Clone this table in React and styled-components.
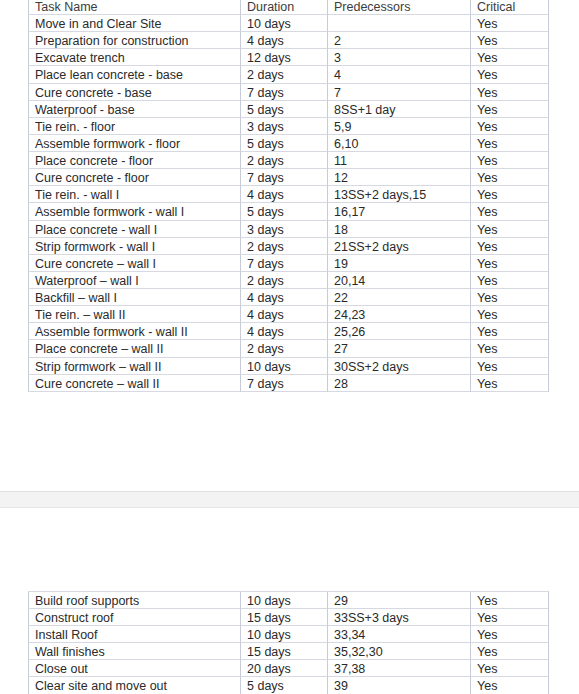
import React from "react";
import styled, { createGlobalStyle } from "styled-components";

const GlobalStyle = createGlobalStyle`
  html, body {
    margin: 0;
    padding: 0;
    background: #ffffff;
    overflow: hidden;
  }
`;

const Page = styled.div`
  width: 579px;
  height: 694px;
  overflow: hidden;
  font-family: "Liberation Sans", Arial, sans-serif;
  font-size: 12.5px;
  color: #2a2a2a;
`;

const Sheet = styled.div`
  display: grid;
  grid-template-columns: 212px 87px 143px 79px;
  margin-left: 28px;
  width: 521px;
  margin-top: ${(p) => (p.$first ? "-2px" : "0")};
  border-top: ${(p) => (p.$first ? "none" : "1px solid #d6d9e2")};
`;

const Cell = styled.div`
  box-sizing: border-box;
  height: ${(p) => p.$h}px;
  line-height: ${(p) => p.$h + 1}px;
  padding-left: 6px;
  border-left: 1px solid #c8ccd8;
  border-right: ${(p) => (p.$last ? "1px solid #c8ccd8" : "none")};
  border-bottom: 1px solid #d6d9e2;
  white-space: nowrap;
  overflow: hidden;
  color: ${(p) => (p.$head ? "#3c3c3c" : "#2a2a2a")};
`;

const Band = styled.div`
  margin-top: 99px;
  height: 15px;
  background: #f3f3f3;
  border-top: 1px solid #e0e0e0;
  border-bottom: 1px solid #e6e6e6;
`;

const Gap = styled.div`
  height: 83px;
`;

const ROW = 17.136;

const firstRows = [
  ["Move in and Clear Site", "10 days", "", "Yes"],
  ["Preparation for construction", "4 days", "2", "Yes"],
  ["Excavate trench", "12 days", "3", "Yes"],
  ["Place lean concrete - base", "2 days", "4", "Yes"],
  ["Cure concrete - base", "7 days", "7", "Yes"],
  ["Waterproof - base", "5 days", "8SS+1 day", "Yes"],
  ["Tie rein. - floor", "3 days", "5,9", "Yes"],
  ["Assemble formwork - floor", "5 days", "6,10", "Yes"],
  ["Place concrete - floor", "2 days", "11", "Yes"],
  ["Cure concrete - floor", "7 days", "12", "Yes"],
  ["Tie rein. - wall I", "4 days", "13SS+2 days,15", "Yes"],
  ["Assemble formwork - wall I", "5 days", "16,17", "Yes"],
  ["Place concrete - wall I", "3 days", "18", "Yes"],
  ["Strip formwork - wall I", "2 days", "21SS+2 days", "Yes"],
  ["Cure concrete \u2013 wall I", "7 days", "19", "Yes"],
  ["Waterproof \u2013 wall I", "2 days", "20,14", "Yes"],
  ["Backfill \u2013 wall I", "4 days", "22", "Yes"],
  ["Tie rein. \u2013 wall II", "4 days", "24,23", "Yes"],
  ["Assemble formwork - wall II", "4 days", "25,26", "Yes"],
  ["Place concrete \u2013 wall II", "2 days", "27", "Yes"],
  ["Strip formwork \u2013 wall II", "10 days", "30SS+2 days", "Yes"],
  ["Cure concrete \u2013 wall II", "7 days", "28", "Yes"],
];

const secondRows = [
  ["Build roof supports", "10 days", "29", "Yes"],
  ["Construct roof", "15 days", "33SS+3 days", "Yes"],
  ["Install Roof", "10 days", "33,34", "Yes"],
  ["Wall finishes", "15 days", "35,32,30", "Yes"],
  ["Close out", "20 days", "37,38", "Yes"],
  ["Clear site and move out", "5 days", "39", "Yes"],
];

function Row({ cells, head, h }) {
  return cells.map((c, i) => (
    <Cell key={i} $h={h} $head={head} $last={i === cells.length - 1}>
      {c}
    </Cell>
  ));
}

export default function App() {
  return (
    <>
      <GlobalStyle />
      <Page>
        <Sheet $first>
          <Row
            head
            h={17}
            cells={["Task Name", "Duration", "Predecessors", "Critical"]}
          />
          {firstRows.map((r, i) => (
            <Row key={i} cells={r} h={ROW} />
          ))}
        </Sheet>

        <Band />
        <Gap />

        <Sheet>
          {secondRows.map((r, i) => (
            <Row key={i} cells={r} h={ROW} />
          ))}
        </Sheet>
      </Page>
    </>
  );
}
